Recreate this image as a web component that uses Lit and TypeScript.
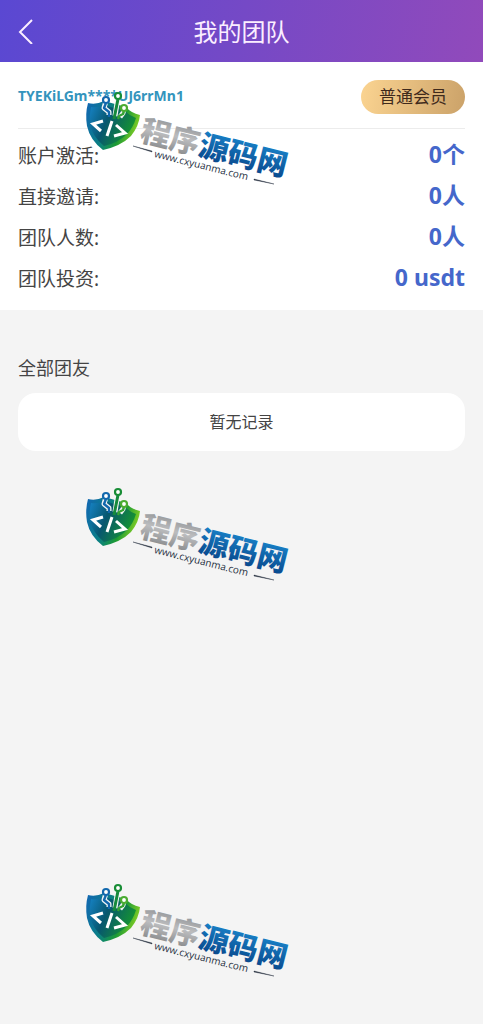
import { LitElement, html, css } from "lit";
import { customElement } from "lit/decorators.js";

interface Stat {
  label: string;
  value: string;
}

@customElement("site-mark")
export class SiteMark extends LitElement {
  static styles = css`
    :host {
      display: block;
      width: 225px;
      height: 110px;
    }
    .mark {
      display: block;
      overflow: visible;
    }
    .name {
      font: 900 30px "Noto Sans CJK SC", sans-serif;
    }
    .site {
      font: 500 10px "Open Sans", "Noto Sans", sans-serif;
      fill: #26303f;
    }
  `;

  render() {
    return html`
      <svg class="mark" width="225" height="110" viewBox="0 0 225 110" aria-hidden="true">
        <defs>
          <linearGradient id="edge" x1="0" y1="0" x2="1" y2="0.3">
            <stop offset="0" stop-color="#1266b5" />
            <stop offset="0.45" stop-color="#0a7f85" />
            <stop offset="0.75" stop-color="#1c9a35" />
            <stop offset="1" stop-color="#76c826" />
          </linearGradient>
          <linearGradient id="core" x1="0" y1="0" x2="1" y2="0.4">
            <stop offset="0" stop-color="#1683c6" />
            <stop offset="0.45" stop-color="#07576f" />
            <stop offset="1" stop-color="#159332" />
          </linearGradient>
          <linearGradient id="silver" x1="0" y1="0" x2="0" y2="1">
            <stop offset="0" stop-color="#808285" />
            <stop offset="0.5" stop-color="#bcbdbf" />
            <stop offset="1" stop-color="#7c7e80" />
          </linearGradient>
          <linearGradient id="blue" x1="0" y1="0" x2="0" y2="1">
            <stop offset="0" stop-color="#1c8fd6" />
            <stop offset="1" stop-color="#063f83" />
          </linearGradient>
        </defs>
        <path d="M13 20Q21 22 29 18L51 24Q56 30 65 32Q64 43 56 53Q46 63 28 67Q15 57 12 43Q10 31 13 20Z" fill="url(#edge)" />
        <path d="M16 24Q23 25 29 22L50 28Q55 33 61 35Q58 45 52 51Q43 60 29 63Q18 54 15 42Q14 33 16 24Z" fill="url(#core)" />
        <g fill="none" stroke-linejoin="round">
          <path d="M31 18L29 25L34 29L34 32M43 14L40 33M49 26L48 30L45 34" stroke="#f4f6f7" stroke-width="5" />
          <path d="M31 20L29 25L34 29L34 34" stroke="#1268ad" stroke-width="2.4" />
          <path d="M43 16L39 36" stroke="#168a3c" stroke-width="3" />
          <path d="M49 28L48 31L44 33L43 36" stroke="#35a333" stroke-width="2.4" />
          <circle cx="31" cy="17" r="3" fill="#fff" stroke="#1268ad" stroke-width="2.2" />
          <circle cx="43" cy="13" r="3" fill="#fff" stroke="#188d36" stroke-width="2.2" />
          <circle cx="49" cy="25" r="3" fill="#fff" stroke="#4bac31" stroke-width="2.2" />
        </g>
        <path d="M28 38L18 41L26 48M37 38L32 53M41 42L50 50L39 53" fill="none" stroke="#fff" stroke-width="3" />
        <g transform="rotate(14 62 60)">
          <text class="name" x="63" y="57" fill="url(#silver)">程序<tspan fill="url(#blue)">源码网</tspan></text>
        </g>
        <g transform="rotate(14 79 73)">
          <text class="site" x="79" y="74">www.cxyuanma.com</text>
        </g>
        <path d="M58 63L77 68L77 69ZM179 96L199 101L179 97Z" fill="#26303f" stroke="#26303f" stroke-width="0.4" />
      </svg>
    `;
  }
}

@customElement("app-root")
export class AppRoot extends LitElement {
  static styles = css`
    :host {
      display: block;
      position: relative;
      min-height: 100vh;
      overflow: hidden;
      background: #f4f4f4;
      color: #444;
      font-family: "Noto Sans", "Noto Sans CJK SC", sans-serif;
    }
    .bar {
      display: grid;
      grid-template-columns: 50px 1fr 50px;
      align-items: center;
      height: 62px;
      background: linear-gradient(100deg, #5a48d2, #7549c6 50%, #914abb);
      color: #fbeeff;
    }
    .back {
      display: flex;
      align-items: center;
      height: 48px;
      padding: 0 0 0 18px;
      border: 0;
      background: none;
      color: inherit;
      cursor: pointer;
    }
    .title {
      margin: 0;
      padding-top: 2px;
      text-align: center;
      font-size: 24px;
      font-weight: 400;
      line-height: 36px;
    }
    .summary {
      padding: 0 18px 12px;
      background: #fff;
    }
    .account {
      display: flex;
      align-items: center;
      justify-content: space-between;
      height: 62px;
      padding-top: 4px;
      border-bottom: 1px solid #ececec;
    }
    .address {
      padding-bottom: 4px;
      color: #3494bd;
      font-size: 14px;
      font-weight: 700;
    }
    .level {
      padding: 0 18px;
      border-radius: 17px;
      background: linear-gradient(100deg, #fbd491, #cba269);
      color: #3f2a1c;
      font-size: 17px;
      line-height: 34px;
    }
    .stats {
      margin: 0;
      padding-top: 5px;
    }
    .row {
      display: flex;
      align-items: baseline;
      justify-content: space-between;
      box-sizing: border-box;
      height: 41px;
      padding-top: 6px;
      line-height: 28px;
    }
    .label {
      font-size: 19px;
    }
    .value {
      margin: 0;
      color: #4567cb;
      font-size: 23px;
      font-weight: 700;
    }
    .members {
      padding: 44px 18px;
    }
    .heading {
      margin: 0 0 11px;
      font-size: 18px;
      font-weight: 400;
      line-height: 28px;
    }
    .empty {
      margin: 0;
      border-radius: 18px;
      background: #fff;
      text-align: center;
      font-size: 16px;
      line-height: 58px;
    }
    .marks {
      position: absolute;
      top: 83px;
      left: 75px;
      display: grid;
      gap: 286px;
      pointer-events: none;
    }
  `;

  private stats: Stat[] = [
    { label: "账户激活:", value: "0个" },
    { label: "直接邀请:", value: "0人" },
    { label: "团队人数:", value: "0人" },
    { label: "团队投资:", value: "0 usdt" },
  ];

  render() {
    return html`
      <header class="bar">
        <button class="back" type="button" aria-label="返回">
          <svg width="15" height="26" viewBox="0 0 15 26" fill="none" stroke="currentColor" stroke-width="2">
            <path d="M14 2L2 14L14 26" />
          </svg>
        </button>
        <h1 class="title">我的团队</h1>
      </header>
      <main>
        <section class="summary">
          <div class="account">
            <span class="address">TYEKiLGm****UJ6rrMn1</span>
            <span class="level">普通会员</span>
          </div>
          <dl class="stats">
            ${this.stats.map(
              (s) => html`<div class="row">
                <dt class="label">${s.label}</dt>
                <dd class="value">${s.value}</dd>
              </div>`
            )}
          </dl>
        </section>
        <section class="members">
          <h2 class="heading">全部团友</h2>
          <p class="empty">暂无记录</p>
        </section>
      </main>
      <div class="marks">
        <site-mark></site-mark>
        <site-mark></site-mark>
        <site-mark></site-mark>
      </div>
    `;
  }
}
